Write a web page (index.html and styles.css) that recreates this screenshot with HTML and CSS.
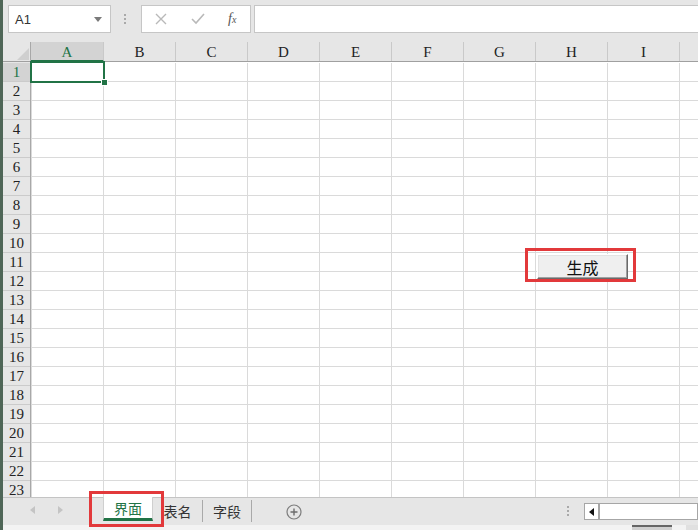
FILE: index.html
```html
<!DOCTYPE html>
<html lang="zh">
<head>
  <meta charset="UTF-8">
  <title>界面</title>
  <link rel="stylesheet" href="styles.css">
</head>
<body>

<div class="app">
  <div class="toolbar">
    <div class="namebox">
      <span>A1</span>
      <svg class="caret" width="8" height="5" viewBox="0 0 8 5"><path d="M0 0h8L4 5z" fill="#7a7a7a"/></svg>
    </div>
    <div class="grip"><i></i><i></i><i></i></div>
    <div class="fxbtns">
      <svg width="12" height="12" viewBox="0 0 12 12"><path d="M1 1l10 10M11 1L1 11" stroke="#b9b9b9" stroke-width="1.4" fill="none"/></svg>
      <svg width="14" height="12" viewBox="0 0 14 12"><path d="M1 6l4 4 8-9" stroke="#b9b9b9" stroke-width="1.6" fill="none"/></svg>
      <span class="fx">f<sub>x</sub></span>
    </div>
    <div class="formula"></div>
  </div>

  <div class="sheet">
    <div class="corner"><span></span></div>
    <div class="colheads">
      <div class="col first active">A</div>
      <div class="col">B</div>
      <div class="col">C</div>
      <div class="col">D</div>
      <div class="col">E</div>
      <div class="col">F</div>
      <div class="col">G</div>
      <div class="col">H</div>
      <div class="col">I</div>
      <div class="col"></div>
    </div>
    <div class="rowheads">
      <div class="row active">1</div>
      <div class="row">2</div>
      <div class="row">3</div>
      <div class="row">4</div>
      <div class="row">5</div>
      <div class="row">6</div>
      <div class="row">7</div>
      <div class="row">8</div>
      <div class="row">9</div>
      <div class="row">10</div>
      <div class="row">11</div>
      <div class="row">12</div>
      <div class="row">13</div>
      <div class="row">14</div>
      <div class="row">15</div>
      <div class="row">16</div>
      <div class="row">17</div>
      <div class="row">18</div>
      <div class="row">19</div>
      <div class="row">20</div>
      <div class="row">21</div>
      <div class="row">22</div>
      <div class="row">23</div>
    </div>
    <div class="cells">
      <div class="selection"><span class="handle"></span></div>
      <button class="gen">生成</button>
    </div>
  </div>

  <div class="tabbar">
    <div class="nav">
      <svg width="5" height="8" viewBox="0 0 5 8"><path d="M5 0v8L0 4z" fill="#c4c4c4"/></svg>
      <svg width="5" height="8" viewBox="0 0 5 8"><path d="M0 0v8l5-4z" fill="#c4c4c4"/></svg>
    </div>
    <div class="tab current">界面</div>
    <div class="tab">表名</div>
    <div class="tab">字段</div>
    <svg class="addsheet" width="16" height="16" viewBox="0 0 16 16">
      <circle cx="8" cy="8" r="7" fill="none" stroke="#7d7d7d" stroke-width="1.2"/>
      <path d="M8 4.5v7M4.5 8h7" stroke="#6d6d6d" stroke-width="1.4"/>
    </svg>
    <div class="right">
      <div class="grip"><i></i><i></i><i></i></div>
      <div class="hscroll">
        <div class="arrow"><svg width="5" height="8" viewBox="0 0 5 8"><path d="M5 0v8L0 4z" fill="#111"/></svg></div>
      </div>
    </div>
  </div>

  <div class="status">
    <span class="view view-a"></span>
    <span class="view view-b"></span>
  </div>

  <div class="mark mark-btn"></div>
  <div class="mark mark-tab"></div>
</div>

</body>
</html>
```

FILE: styles.css
```css
body {
  margin: 0;
  background: #fff;
  font-family: "Liberation Sans", Arial, sans-serif;
  overflow: hidden;
}

.app {
  position: relative;
  width: 698px;
  height: 530px;
  box-sizing: border-box;
  border-left: 3px solid #4f6657;
  overflow: hidden;
  display: flex;
  flex-direction: column;
}

/* formula bar */
.toolbar {
  height: 42px;
  flex: none;
  background: #e6e6e6;
  display: flex;
  align-items: flex-start;
  padding-top: 5px;
  box-sizing: border-box;
}

.namebox,
.fxbtns,
.formula {
  height: 28px;
  box-sizing: border-box;
  background: #fff;
  border: 1px solid #c6c6c6;
}

.namebox {
  width: 103px;
  margin-left: 5px;
  display: flex;
  align-items: center;
  justify-content: space-between;
  padding: 0 8px 0 6px;
  font-size: 13px;
  color: #333;
}

.caret {
  margin-top: 1px;
}

.grip {
  width: 2px;
  display: flex;
  flex-direction: column;
  gap: 2px;
}

.grip i {
  width: 2px;
  height: 2px;
  background: #a9a9a9;
}

.toolbar .grip {
  margin: 9px 15px 0 13px;
}

.fxbtns {
  width: 110px;
  display: flex;
  align-items: center;
  padding-left: 13px;
  gap: 24px;
}

.fx {
  font-family: "Liberation Serif", serif;
  font-style: italic;
  font-size: 14px;
  color: #555;
  margin-left: -1px;
}

.fx sub {
  font-size: 10px;
  vertical-align: 0;
}

.formula {
  flex: 1;
  margin-left: 3px;
  margin-right: -2px;
}

/* grid */
.sheet {
  height: 455px;
  flex: none;
  display: grid;
  grid-template-columns: 28px 1fr;
  grid-template-rows: 20px 1fr;
  overflow: hidden;
}

.corner {
  background: #e6e6e6;
  border-right: 1px solid #a8a8a8;
  border-bottom: 1px solid #a0a0a0;
  box-sizing: border-box;
  position: relative;
}

.corner span {
  position: absolute;
  right: 1px;
  bottom: 1px;
  width: 0;
  height: 0;
  border-left: 12px solid transparent;
  border-bottom: 12px solid #cfcfcf;
}

.colheads {
  display: flex;
  background: #e6e6e6;
  border-bottom: 1px solid #a0a0a0;
  box-sizing: border-box;
}

.col {
  flex: none;
  width: 72px;
  box-sizing: border-box;
  border-right: 1px solid #c9c9c9;
  text-align: center;
  font-family: "Liberation Serif", serif;
  font-size: 15px;
  line-height: 20px;
  color: #222;
}

.col.first {
  width: 73px;
}

.col.active {
  background: #d3d3d3;
  color: #217346;
  border-bottom: 2px solid #217346;
  margin-bottom: -1px;
}

.rowheads {
  background: #e6e6e6;
  border-right: 1px solid #a8a8a8;
  box-sizing: border-box;
  padding-top: 1px;
}

.row {
  height: 19px;
  box-sizing: border-box;
  border-bottom: 1px solid #cbcbcb;
  text-align: center;
  font-family: "Liberation Serif", serif;
  font-size: 15px;
  line-height: 19px;
  color: #222;
}

.row.active {
  background: #d3d3d3;
  color: #217346;
}

.cells {
  position: relative;
  margin-top: 1px;
  background-image:
    linear-gradient(to left, #dadada 1px, transparent 1px),
    linear-gradient(to top, #dadada 1px, transparent 1px);
  background-size: 72px 100%, 100% 19px;
  background-position: 1px 0, 0 0;
}

.selection {
  position: absolute;
  left: -1px;
  top: -2px;
  width: 75px;
  height: 22px;
  box-sizing: border-box;
  border: 2px solid #217346;
}

.handle {
  position: absolute;
  right: -5px;
  bottom: -5px;
  width: 5px;
  height: 5px;
  background: #217346;
  border: 1px solid #fff;
}

.gen {
  position: absolute;
  left: 506px;
  top: 191px;
  width: 91px;
  height: 25px;
  margin: 0;
  padding: 0;
  box-sizing: border-box;
  background: #efefef;
  border: 1px solid;
  border-color: #fff #6a6a6a #6a6a6a #fff;
  box-shadow: inset -1px -1px 0 #a0a0a0, inset 1px 1px 0 #e3e3e3;
  font-family: "Noto Sans CJK SC", sans-serif;
  font-size: 16px;
  line-height: 22px;
  color: #111;
}

/* sheet tabs */
.tabbar {
  height: 28px;
  flex: none;
  background: #e6e6e6;
  border-top: 1px solid #c4c4c4;
  box-sizing: border-box;
  display: flex;
  align-items: flex-start;
}

.nav {
  width: 100px;
  height: 24px;
  display: flex;
  align-items: center;
  gap: 23px;
  padding-left: 27px;
  box-sizing: border-box;
}

.tab {
  width: 50px;
  height: 22px;
  margin-top: 2px;
  box-sizing: border-box;
  border-right: 1px solid #a9a9a9;
  text-align: center;
  font-family: "Noto Sans CJK SC", sans-serif;
  font-size: 14px;
  line-height: 22px;
  color: #333;
}

.tab:nth-child(4) {
  width: 49px;
}

.tab.current {
  height: 24px;
  margin-top: -1px;
  background: #fff;
  color: #217346;
  border: 1px solid #cfcfcf;
  border-top: none;
  border-bottom: 3px solid #217346;
  line-height: 22px;
}

.addsheet {
  margin: 6px 0 0 34px;
}

.right {
  margin-left: auto;
  display: flex;
  align-items: flex-start;
}

.right .grip {
  margin: 8px 15px 0 0;
}

.hscroll {
  width: 114px;
  height: 17px;
  margin-top: 5px;
  box-sizing: border-box;
  border: 1px solid #a6a6a6;
  background: #fff;
}

.arrow {
  width: 15px;
  height: 15px;
  box-sizing: border-box;
  border-right: 2px solid #a6a6a6;
  display: flex;
  align-items: center;
  justify-content: center;
}

.status {
  flex: 1;
  background: #f3f3f3;
  position: relative;
}

.view {
  position: absolute;
  top: 0;
  height: 5px;
  background: #d0d0d0;
}

.view-a {
  left: 629px;
  width: 40px;
  border-top: 2px solid #666;
  box-sizing: border-box;
}

.view-b {
  left: 683px;
  width: 15px;
  background: #e0e0e0;
}

/* annotation boxes */
.mark {
  position: absolute;
  box-sizing: border-box;
  border: 3px solid #e2393b;
}

.mark-btn {
  left: 522px;
  top: 248px;
  width: 111px;
  height: 34px;
}

.mark-tab {
  left: 86px;
  top: 491px;
  width: 75px;
  height: 36px;
}
```
